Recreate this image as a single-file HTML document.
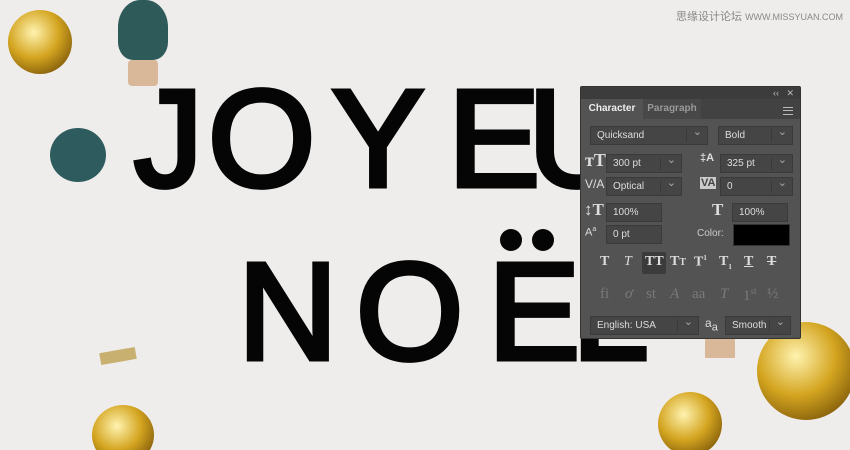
<!DOCTYPE html>
<html><head><meta charset="utf-8"><style>
html,body{margin:0;width:850px;height:450px;overflow:hidden}
body{background:#efedeb;position:relative;font-family:"Liberation Sans",sans-serif}
.L{position:absolute;font-size:138px;line-height:138px;font-weight:normal;color:#050505;-webkit-text-stroke:5px #050505}
.p{position:absolute;background:#535353;border-radius:2px}
.f{position:absolute;background:#454545;border:1px solid #3a3a3a;color:#ddd;font-size:10px;line-height:17px;padding-left:6px;box-sizing:border-box;height:19px}
.dd:after{content:"⌄";position:absolute;right:5px;top:-3px;color:#aaa;font-size:11px}
.dd:before{content:"";position:absolute;right:20px;top:2px;bottom:2px;border-left:1px solid #3a3a3a}
.ic{position:absolute;color:#ddd;font-family:"Liberation Serif",serif;font-weight:bold}
.g{position:absolute;color:#7a7a7a;font-family:"Liberation Serif",serif;font-size:15px}
.w{position:absolute;color:#ddd;font-size:10px}
.bell{position:absolute;border-radius:50%;background:radial-gradient(circle at 40% 35%,#fff3b0,#d4a520 45%,#7a5508 85%)}
</style></head><body>
<div class="bell" style="left:8px;top:10px;width:64px;height:64px"></div>
<div style="position:absolute;left:118px;top:0;width:50px;height:60px;border-radius:45% 45% 30% 30%;background:#2f5a5a"></div>
<div style="position:absolute;left:128px;top:60px;width:30px;height:26px;background:#d9b89a;border-radius:4px"></div>
<div style="position:absolute;left:50px;top:128px;width:56px;height:54px;border-radius:50%;background:#2e5c5e"></div>
<div class="bell" style="left:92px;top:405px;width:62px;height:60px"></div>
<div class="bell" style="left:658px;top:392px;width:64px;height:64px"></div>
<div class="bell" style="left:757px;top:322px;width:98px;height:98px"></div>
<div style="position:absolute;left:705px;top:336px;width:30px;height:22px;background:#d9b89a"></div>
<div style="position:absolute;left:100px;top:350px;width:36px;height:12px;background:#c8b070;transform:rotate(-10deg)"></div>
<div class="L" style="left:134px;top:70px">J</div>
<div class="L" style="left:208px;top:70px">O</div>
<div class="L" style="left:332px;top:70px">Y</div>
<div class="L" style="left:448px;top:70px">E</div>
<div class="L" style="left:528px;top:70px">U</div>
<div class="L" style="left:238px;top:243px">N</div>
<div class="L" style="left:356px;top:243px">O</div>
<div class="L" style="left:488px;top:243px">E</div>
<div style="position:absolute;left:500px;top:229px;width:22px;height:22px;border-radius:50%;background:#050505"></div>
<div style="position:absolute;left:532px;top:229px;width:22px;height:22px;border-radius:50%;background:#050505"></div>
<div class="L" style="left:572px;top:243px">L</div>
<div style="position:absolute;left:676px;top:8px;font-size:11px;color:#888;font-family:'Liberation Sans','Noto Sans CJK SC',sans-serif">思缘设计论坛 <span style="font-size:9px">WWW.MISSYUAN.COM</span></div>
<div class="p" style="left:580px;top:86px;width:221px;height:253px;border:1px solid #333;box-sizing:border-box">
<div style="position:absolute;left:0;top:0;right:0;height:12px;background:#3c3c3c"></div>
<div style="position:absolute;right:6px;top:0;color:#bbb;font-size:9px;line-height:12px">‹‹ &nbsp; ✕</div>
<div style="position:absolute;left:0;top:12px;right:0;height:20px;background:#424242"></div>
<div style="position:absolute;left:0;top:12px;width:62px;height:20px;background:#535353;color:#eee;font-size:10px;font-weight:bold;line-height:20px;text-align:center">Character</div>
<div style="position:absolute;left:62px;top:12px;width:58px;height:20px;background:#484848;color:#999;font-size:10px;font-weight:bold;line-height:20px;text-align:center">Paragraph</div>
<div style="position:absolute;right:7px;top:20px;width:10px;height:6px;border-top:1px solid #bbb;border-bottom:1px solid #bbb"><div style="border-top:1px solid #bbb;margin-top:2px"></div></div>
</div>
<div class="f dd" style="left:590px;top:126px;width:118px">Quicksand</div>
<div class="f dd" style="left:718px;top:126px;width:75px">Bold</div>
<div class="ic" style="left:585px;top:150px;font-size:18px">ᴛT</div>
<div class="f dd" style="left:606px;top:154px;width:76px">300 pt</div>
<div class="ic" style="left:700px;top:152px;font-size:11px;font-family:'Liberation Sans'">‡A</div>
<div class="f dd" style="left:720px;top:154px;width:73px">325 pt</div>
<div class="w" style="left:585px;top:177px;font-size:12px">V/A</div>
<div class="f dd" style="left:606px;top:177px;width:76px">Optical</div>
<div class="w" style="left:700px;top:177px;font-size:11px;font-weight:bold;background:#ccc;color:#444;padding:0 1px">VA</div>
<div class="f dd" style="left:720px;top:177px;width:73px">0</div>
<div class="ic" style="left:584px;top:200px;font-size:17px">↕T</div>
<div class="f" style="left:606px;top:203px;width:56px">100%</div>
<div class="ic" style="left:712px;top:200px;font-size:17px">T</div>
<div class="f" style="left:732px;top:203px;width:56px">100%</div>
<div class="w" style="left:585px;top:226px;font-size:11px">A<sup style="font-size:7px">a</sup></div>
<div class="f" style="left:606px;top:225px;width:56px">0 pt</div>
<div class="w" style="left:697px;top:228px;color:#ccc">Color:</div>
<div style="position:absolute;left:733px;top:224px;width:55px;height:20px;background:#000;border:1px solid #333"></div>
<div style="position:absolute;left:642px;top:252px;width:24px;height:22px;background:#3b3b3b;border-radius:2px"></div>
<div class="ic" style="left:600px;top:254px;font-size:14px">T</div>
<div class="ic" style="left:624px;top:254px;font-size:14px;font-style:italic;font-weight:normal">T</div>
<div class="ic" style="left:645px;top:254px;font-size:14px">TT</div>
<div class="ic" style="left:670px;top:254px;font-size:14px">T<span style="font-size:10px">T</span></div>
<div class="ic" style="left:694px;top:254px;font-size:14px">T<sup style="font-size:7px">1</sup></div>
<div class="ic" style="left:719px;top:254px;font-size:14px">T<sub style="font-size:7px">1</sub></div>
<div class="ic" style="left:744px;top:254px;font-size:14px;text-decoration:underline">T</div>
<div class="ic" style="left:767px;top:254px;font-size:14px;text-decoration:line-through">T</div>
<div class="g" style="left:600px;top:286px">fi</div>
<div class="g" style="left:625px;top:286px;font-style:italic">ơ</div>
<div class="g" style="left:646px;top:286px">st</div>
<div class="g" style="left:670px;top:286px;font-style:italic">A</div>
<div class="g" style="left:692px;top:286px">aa</div>
<div class="g" style="left:720px;top:286px;font-style:italic">T</div>
<div class="g" style="left:743px;top:286px">1<sup style="font-size:9px">st</sup></div>
<div class="g" style="left:767px;top:286px">½</div>
<div class="f dd" style="left:590px;top:316px;width:109px">English: USA</div>
<div class="w" style="left:705px;top:316px;font-size:12px">a<sub style="font-size:11px">a</sub></div>
<div class="f dd" style="left:725px;top:316px;width:66px">Smooth</div>
</body></html>
